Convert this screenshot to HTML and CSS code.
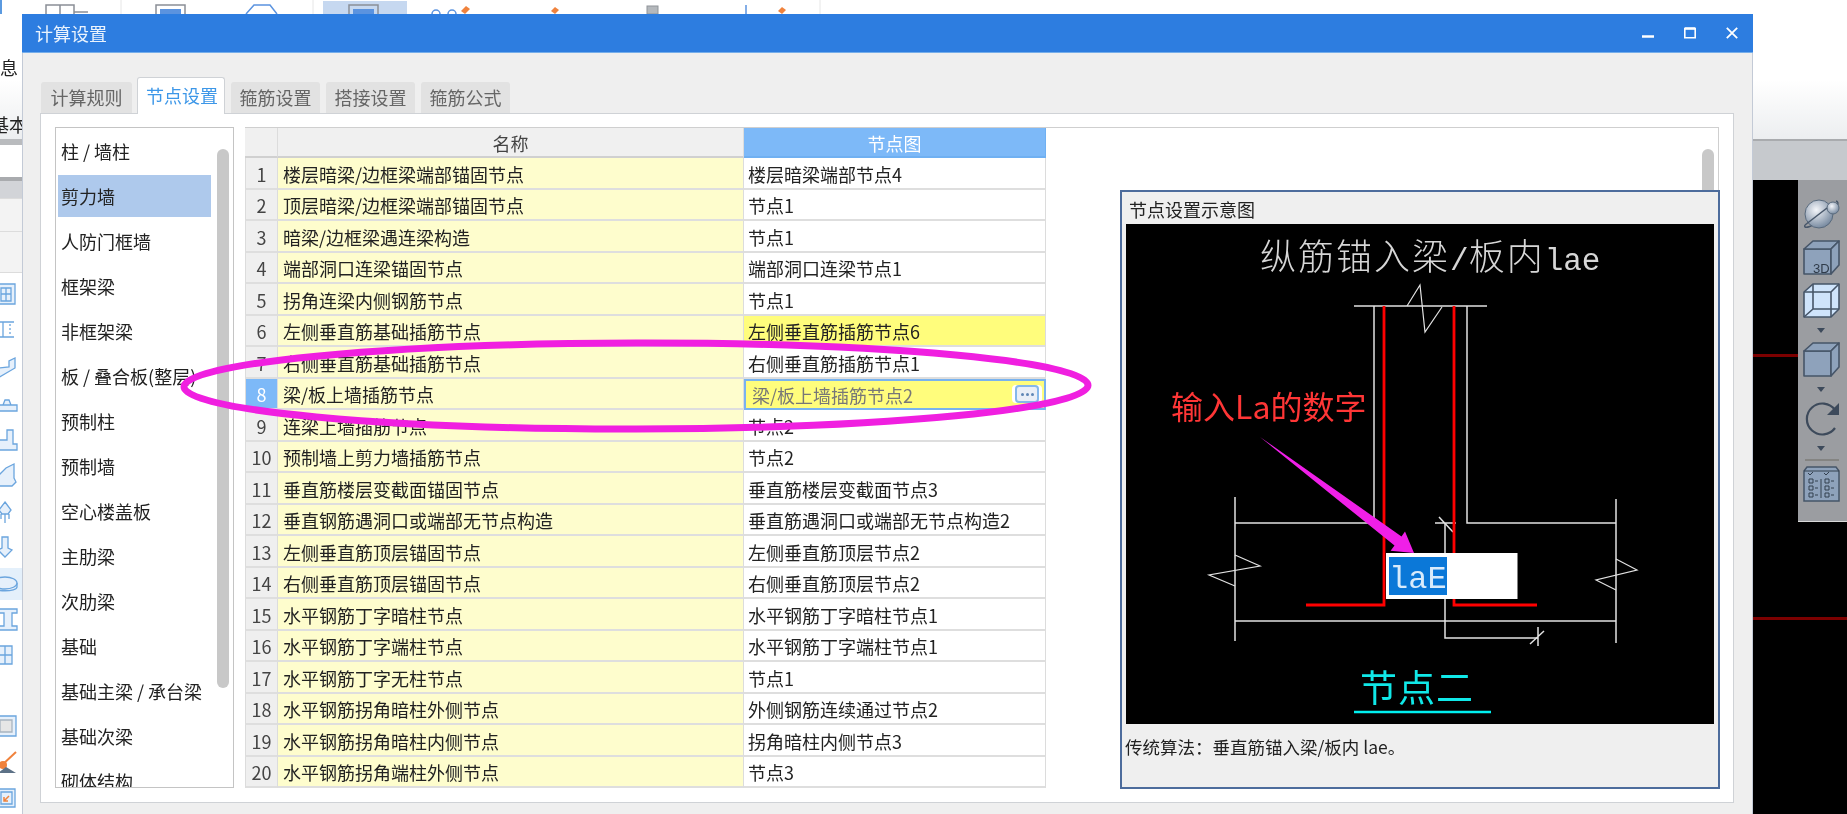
FILE: index.html
```html
<!DOCTYPE html>
<html lang="zh-CN">
<head>
<meta charset="utf-8">
<title>计算设置</title>
<link rel="stylesheet" href="styles.css">
</head>
<body>
<div class="app">
  <header class="ribbon">
    <svg class="ribbon-icons" viewBox="0 0 860 14" width="860" height="14">
      <rect x="0" y="0" width="2" height="14" fill="#5b9ae0"/>
      <rect x="323" y="1" width="84" height="13" fill="#c6d8f0"/>
      <g fill="none" stroke="#8a8f96" stroke-width="1.5">
        <path d="M46 14V5H74V14M60 5V14M74 12H88"/>
        <path d="M156 14V5H185V14"/>
        <path d="M349 14V5H378V14"/>
      </g>
      <rect x="160" y="9" width="21" height="5" fill="#5b93df"/>
      <rect x="353" y="9" width="21" height="5" fill="#5b93df"/>
      <path d="M246 14L254 5H270L277 14" fill="none" stroke="#5b93df" stroke-width="1.5"/>
      <path d="M121 0V14M313 0V14M820 0V14" stroke="#e6e6e6"/>
      <g fill="none" stroke="#5b93df" stroke-width="1.5">
        <circle cx="436" cy="14" r="4"/><circle cx="452" cy="14" r="4"/>
      </g>
      <path d="M746 5V14" stroke="#5b93df" stroke-width="1.5"/>
      <g fill="#f0823c">
        <path d="M466 6l4 3-5 5-4-3z"/><path d="M555 7l4 3-4 4-4-3z"/><path d="M782 7l4 3-4 4-4-3z"/>
      </g>
      <rect x="647" y="6" width="11" height="8" fill="#b4b8bc" stroke="#8f9499"/>
    </svg>
    <div class="ribbon-left">
      <span class="ribbon-label first">息</span>
      <span class="ribbon-label second">基本</span>
    </div>
  </header>
  <div class="main">
    <aside class="side">
      <div class="side-line"></div>
      <div class="side-input"></div>
      <div class="side-line thin"></div>
      <div class="side-head"></div>
      <div class="side-row a"></div>
      <div class="side-row b"></div>
      <svg class="side-icons" viewBox="0 273 22 541" width="22" height="541">
        <rect x="0" y="568" width="22" height="32" fill="#e4f0fb"/>
        <g fill="#e6f0fb" stroke="#6ba5de" stroke-width="1.3">
          <path d="M-2 284H15V304H-2z"/><path d="M1 288H11V301H1zM6 288V301M1 294H11"/>
          <path d="M-2 322H14M-2 337H14M3 322V337"/>
          <path d="M10 324V336" stroke-dasharray="2 2"/>
          <path d="M-2 378L15 368V358L9 361V367L-2 368z"/>
          <path d="M-2 405H17V411H-2zM3 405L5 400H9L11 405"/>
          <path d="M-2 440H7V430H13V444H17V450H-2z"/>
          <path d="M-2 476L6 468L14 464V478L16 482L12 486H-2z"/>
          <path d="M5 502L11 510L8 514H2L-1 510zM5 514V523M1 514V519M9 514V519"/>
          <path d="M2 537H8V548L12 550L5 557L-2 550L2 548z"/>
          <path d="M-7 583V587C-7 592 17 592 17 587V583"/>
          <ellipse cx="5" cy="583" rx="12" ry="6"/>
          <path d="M-2 609H17V613H12V626H17V630H-2V626H4V613H-2z"/>
          <path d="M-2 646H12V664H-2zM5 646V664M-2 655H12"/>
          <path d="M-2 716H16V736H-2z"/>
          <path d="M0 720H12V732H0z" fill="#e6e6e6" stroke="#a8b4c0"/>
          <path d="M-2 789H15V807H-2zM1 792H12V804H1z"/>
        </g>
        <path d="M1 766L16 752" stroke="#f0823c" stroke-width="2"/>
        <circle cx="3" cy="765" r="4" fill="#f0823c"/>
        <path d="M-2 773L6 767L16 773z" fill="#5c7186"/>
        <path d="M9 796L4 801M4 797V801H8" fill="none" stroke="#f0823c" stroke-width="1.5"/>
      </svg>
    </aside>
    <div class="under"></div>
    <section class="view">
      <div class="view-band"></div>
      <div class="canvas">
        <svg class="toolbar" viewBox="1798 181 49 341" width="49" height="341">
          <defs>
            <radialGradient id="ball" cx="40%" cy="35%" r="70%">
              <stop offset="0" stop-color="#f4f6fa"/>
              <stop offset="1" stop-color="#71849b"/>
            </radialGradient>
          </defs>
          <rect x="1798" y="181" width="49" height="341" fill="#9b9da1"/>
          <path d="M1805 226C1803 231 1812 228 1828 217C1838 209 1840 203 1836 202" fill="none" stroke="#48576a" stroke-width="1.5"/>
          <circle cx="1819" cy="215" r="14" fill="url(#ball)" stroke="#596a7d"/>
          <circle cx="1833" cy="209" r="6" fill="url(#ball)" stroke="#596a7d"/>
          <path d="M1805 226L1827 209" stroke="#48576a" stroke-width="1.5"/>
          <g fill="#8ea2bb" stroke="#465568" stroke-width="1.6" stroke-linejoin="round">
            <path d="M1804 250H1831V275H1804z"/><path d="M1804 250L1813 242H1839L1831 250z"/><path d="M1831 250L1839 242V266L1831 275z"/>
            <path d="M1804 352H1831V377H1804z"/><path d="M1804 352L1813 344H1839L1831 352z"/><path d="M1831 352L1839 344V368L1831 377z"/>
          </g>
          <text class="t3d" x="1813" y="274">3D</text>
          <g fill="#cfe4fb" stroke="#465568" stroke-width="1.6" stroke-linejoin="round">
            <path d="M1804 293L1813 285H1839V310L1831 318H1804z"/>
            <path d="M1804 293H1831V318M1831 293L1839 285M1813 285V310H1839M1804 318L1813 310" fill="none"/>
          </g>
          <g fill="#3d4a5b">
            <path d="M1817 329H1825L1821 334z"/><path d="M1817 388H1825L1821 393z"/><path d="M1817 447H1825L1821 452z"/>
            <path d="M1839 404V416H1827z"/>
          </g>
          <path d="M1835 411A15.500 15.500 0 1 0 1835 429" fill="none" stroke="#3d4a5b" stroke-width="2.200"/>
          <path d="M1805 461H1839" stroke="#7c7c78" stroke-width="1.500"/>
          <g fill="#8ea2bb" stroke="#465568" stroke-width="1.500">
            <path d="M1804 472L1807 468H1836L1839 472V502H1804z"/>
          </g>
          <g fill="none" stroke="#33404f" stroke-width="1">
            <path d="M1804 472H1839M1821 480V499"/>
            <path d="M1808 474l2 2 3-3M1824 474l2 2 3-3"/>
            <path d="M1809 480h4v4h-4zM1809 487h4v4h-4zM1809 494h4v4h-4zM1825 480h4v4h-4zM1825 487h4v4h-4zM1825 494h4v4h-4z"/>
            <path d="M1815 482h3M1815 489h3M1815 496h3M1831 482h3M1831 489h3M1831 496h3"/>
          </g>
        </svg>
      </div>
    </section>
  </div>

  <div class="dialog">
    <div class="titlebar">
      <span class="title">计算设置</span>
      <div class="winbtns">
        <svg class="winbtn" viewBox="0 0 12 12" width="12" height="12"><path d="M0 9.500H12" stroke="#fff" stroke-width="2.500"/></svg>
        <svg class="winbtn" viewBox="0 0 12 12" width="12" height="12"><path d="M.8 1.500H11.200V10.800H.8z" fill="none" stroke="#fff" stroke-width="1.600"/><path d="M.8 1.500H11.200" stroke="#fff" stroke-width="2.500"/></svg>
        <svg class="winbtn" viewBox="0 0 12 12" width="12" height="12"><path d="M.8 .8L11.200 11.200M11.200 .8L.8 11.200" stroke="#fff" stroke-width="1.800"/></svg>
      </div>
    </div>
    <nav class="tabs">
      <span class="tab w91">计算规则</span>
      <span class="tab active">节点设置</span>
      <span class="tab">箍筋设置</span>
      <span class="tab">搭接设置</span>
      <span class="tab">箍筋公式</span>
    </nav>
    <div class="pane">
      <div class="list">
        <div class="item">柱 / 墙柱</div>
        <div class="item selected">剪力墙</div>
        <div class="item">人防门框墙</div>
        <div class="item">框架梁</div>
        <div class="item">非框架梁</div>
        <div class="item">板 / 叠合板(整层)</div>
        <div class="item">预制柱</div>
        <div class="item">预制墙</div>
        <div class="item">空心楼盖板</div>
        <div class="item">主肋梁</div>
        <div class="item">次肋梁</div>
        <div class="item">基础</div>
        <div class="item">基础主梁 / 承台梁</div>
        <div class="item">基础次梁</div>
        <div class="item">砌体结构</div>
        <div class="scroll list-scroll"></div>
      </div>
      <div class="region">
        <div class="scroll region-scroll"></div>
        <div class="grid">
          <div class="cell head"></div><div class="cell head">名称</div><div class="cell head blue">节点图</div>
          <div class="cell num">1</div><div class="cell name">楼层暗梁/边框梁端部锚固节点</div><div class="cell node">楼层暗梁端部节点4</div>
          <div class="cell num">2</div><div class="cell name">顶层暗梁/边框梁端部锚固节点</div><div class="cell node">节点1</div>
          <div class="cell num">3</div><div class="cell name">暗梁/边框梁遇连梁构造</div><div class="cell node">节点1</div>
          <div class="cell num">4</div><div class="cell name">端部洞口连梁锚固节点</div><div class="cell node">端部洞口连梁节点1</div>
          <div class="cell num">5</div><div class="cell name">拐角连梁内侧钢筋节点</div><div class="cell node">节点1</div>
          <div class="cell num">6</div><div class="cell name">左侧垂直筋基础插筋节点</div><div class="cell node changed">左侧垂直筋插筋节点6</div>
          <div class="cell num">7</div><div class="cell name">右侧垂直筋基础插筋节点</div><div class="cell node">右侧垂直筋插筋节点1</div>
          <div class="cell num current">8</div><div class="cell name">梁/板上墙插筋节点</div>
          <div class="cell editing"><span class="edit-text">梁/板上墙插筋节点2</span><span class="more"><i></i><i></i><i></i></span></div>
          <div class="cell num">9</div><div class="cell name">连梁上墙插筋节点</div><div class="cell node">节点2</div>
          <div class="cell num">10</div><div class="cell name">预制墙上剪力墙插筋节点</div><div class="cell node">节点2</div>
          <div class="cell num">11</div><div class="cell name">垂直筋楼层变截面锚固节点</div><div class="cell node">垂直筋楼层变截面节点3</div>
          <div class="cell num">12</div><div class="cell name">垂直钢筋遇洞口或端部无节点构造</div><div class="cell node">垂直筋遇洞口或端部无节点构造2</div>
          <div class="cell num">13</div><div class="cell name">左侧垂直筋顶层锚固节点</div><div class="cell node">左侧垂直筋顶层节点2</div>
          <div class="cell num">14</div><div class="cell name">右侧垂直筋顶层锚固节点</div><div class="cell node">右侧垂直筋顶层节点2</div>
          <div class="cell num">15</div><div class="cell name">水平钢筋丁字暗柱节点</div><div class="cell node">水平钢筋丁字暗柱节点1</div>
          <div class="cell num">16</div><div class="cell name">水平钢筋丁字端柱节点</div><div class="cell node">水平钢筋丁字端柱节点1</div>
          <div class="cell num">17</div><div class="cell name">水平钢筋丁字无柱节点</div><div class="cell node">节点1</div>
          <div class="cell num">18</div><div class="cell name">水平钢筋拐角暗柱外侧节点</div><div class="cell node">外侧钢筋连续通过节点2</div>
          <div class="cell num">19</div><div class="cell name">水平钢筋拐角暗柱内侧节点</div><div class="cell node">拐角暗柱内侧节点3</div>
          <div class="cell num">20</div><div class="cell name">水平钢筋拐角端柱外侧节点</div><div class="cell node">节点3</div>
        </div>
        <div class="preview">
          <div class="preview-title">节点设置示意图</div>
          <svg class="drawing" viewBox="1126 224 588 500" width="588" height="500">
            <text class="dw-title" x="1260" y="270">纵筋锚入梁<tspan class="dw-mono">/</tspan>板内<tspan class="dw-mono">lae</tspan></text>
            <g fill="none" stroke="#e2e2e2" stroke-width="1.500">
              <path d="M1354 306H1487"/>
              <path d="M1374 306V523H1235M1467 306V523H1616"/>
              <path d="M1235 497V641M1616 499V643M1235 621H1616"/>
              <path d="M1445 523V638H1538"/>
              <path d="M1435 523H1456M1439 517L1453 532M1538 627V646M1530 644L1544 631"/>
              <path d="M1407 306L1420 285L1425 332L1442 307" stroke-width="1.200"/>
              <path d="M1235 555L1260 566L1209 575L1235 586" stroke-width="1.200"/>
              <path d="M1616 559L1637 570L1596 580L1616 590" stroke-width="1.200"/>
            </g>
            <path d="M1384 306V605H1306M1454 306V605H1537" fill="none" stroke="#ff0000" stroke-width="2.800"/>
            <rect x="1386" y="553" width="131.500" height="46" fill="#fff"/>
            <rect x="1389" y="557" width="58" height="38" fill="#0b78d8"/>
            <text class="dw-input" x="1389" y="588">laE</text>
            <polygon points="1260,437 1401.500,536.400 1405,531.500 1414,553 1390.600,550.800 1394.500,545.600" fill="#f01fe8"/>
            <text class="dw-note" x="1171" y="419">输入La的数字</text>
            <text class="dw-node" x="1360" y="702">节点二</text>
            <path d="M1354 712H1491" stroke="#00f0f0" stroke-width="2.500"/>
          </svg>
          <div class="caption">传统算法：垂直筋锚入梁/板内 lae。</div>
        </div>
      </div>
    </div>
  </div>

  <svg class="ring" viewBox="0 0 1847 814" width="1847" height="814">
    <ellipse cx="636" cy="386" rx="452" ry="43" fill="none" stroke="#f01fe0" stroke-width="7" transform="rotate(-0.1 636 386)"/>
  </svg>
</div>
</body>
</html>
```

FILE: styles.css
```css
* { box-sizing: border-box; }
html, body { margin: 0; padding: 0; }
body { width: 1847px; height: 814px; overflow: hidden; background: #fff; }

.app {
  position: relative;
  width: 1847px;
  height: 814px;
  overflow: hidden;
  display: flex;
  flex-direction: column;
  font-family: "Noto Sans CJK SC", "Noto Sans", sans-serif;
  font-size: 18px;
  color: #222;
  background: #fff;
  filter: blur(0.45px);
}

/* background application */
.ribbon {
  height: 139px;
  flex: none;
  background: linear-gradient(#fff 0, #fff 80px, #eceef0 139px);
  overflow: hidden;
}
.ribbon-icons { display: block; }
.ribbon-left { width: 22px; display: flex; flex-direction: column; align-items: flex-end; }
.ribbon-label { white-space: nowrap; line-height: 20px; color: #222; }
.ribbon-label.first { margin-top: 43px; margin-right: 4px; }
.ribbon-label.second { margin-top: 37px; margin-right: -5px; }

.main { flex: 1; display: flex; min-height: 0; }
.side { width: 22px; flex: none; display: flex; flex-direction: column; background: #fff; }
.side-line { height: 6px; background: #b9bbbe; flex: none; }
.side-line.thin { height: 4px; background: #a9abae; }
.side-input { height: 32px; background: #fff; flex: none; }
.side-head { height: 17px; background: #d2d4d8; flex: none; }
.side-row { flex: none; background: #f3f3f3; border-top: 1px solid #dcdcdc; }
.side-row.a { height: 33px; }
.side-row.b { height: 42px; border-bottom: 1px solid #dcdcdc; }
.side-icons { display: block; flex: none; }
.under { flex: 1; background: #efefef; }
.view { width: 94px; flex: none; display: flex; flex-direction: column; }
.view-band { height: 41px; flex: none; background: #c6c9cd; border-top: 2px solid #a9abae; }
.canvas {
  flex: 1;
  display: flex;
  justify-content: flex-end;
  align-items: flex-start;
  background-color: #000;
  background-image: linear-gradient(#7c0000, #7c0000), linear-gradient(#7c0000, #7c0000);
  background-repeat: no-repeat;
  background-size: 100% 3px, 100% 3px;
  background-position: 0 174px, 0 437px;
}
.toolbar { display: block; box-shadow: 0 1px 0 #d8d8d8; }
.t3d { font-family: "Liberation Sans", sans-serif; font-size: 13px; fill: #2f3b49; }

/* dialog window */
.dialog {
  position: absolute;
  left: 22px;
  top: 14px;
  width: 1731px;
  height: 800px;
  display: flex;
  flex-direction: column;
  background: #efefef;
  border-left: 1px solid #c3cad6;
  border-right: 1px solid #c3cad6;
}
.titlebar {
  height: 39px;
  flex: none;
  margin: 0 -1px;
  padding: 0 15px 0 13px;
  display: flex;
  align-items: center;
  justify-content: space-between;
  background: #2d7de0;
  border-bottom: 1px solid #76aeea;
  color: #fff;
}
.title { font-size: 18px; line-height: 24px; color: #eaf3fd; }
.winbtns { display: flex; gap: 30px; }
.winbtn { display: block; }

.tabs {
  height: 37px;
  flex: none;
  margin: 23px 0 0 18px;
  display: flex;
  align-items: flex-end;
  gap: 6px;
}
.tab {
  width: 89px;
  height: 31px;
  padding-bottom: 2px;
  display: flex;
  align-items: center;
  justify-content: center;
  background: #e2e2e2;
  color: #666;
  line-height: 24px;
  border-radius: 3px 3px 0 0;
}
.tab.w91 { width: 91px; }
.tab.active {
  width: 88px;
  height: 37px;
  margin-left: -1px;
  margin-bottom: -1px;
  padding-left: 2px;
  background: #fff;
  color: #3d97e8;
  border: 1px solid #cfd2d6;
  border-bottom: 0;
  position: relative;
  z-index: 1;
}

.pane {
  width: 1694px;
  height: 690px;
  flex: none;
  margin-left: 17px;
  padding: 13px 14px 14px 14px;
  display: flex;
  gap: 11px;
  background: #fff;
  border: 1px solid #cfd2d6;
}

/* left list */
.list {
  position: relative;
  width: 179px;
  flex: none;
  overflow: hidden;
  padding: 2px 2px 0 2px;
  border: 1px solid #c4c4c4;
  display: flex;
  flex-direction: column;
  gap: 3px;
}
.item {
  height: 42px;
  flex: none;
  width: 153px;
  padding: 0 0 0 3px;
  display: flex;
  align-items: center;
  white-space: nowrap;
  line-height: 24px;
}
.item.selected { background: #aec9ec; }
.scroll { position: absolute; width: 12px; background: #c8c8c8; border-radius: 6px 6px 0 0; }
.list-scroll { left: 161px; top: 21px; height: 539px; border-radius: 6px; }

/* table region */
.region {
  position: relative;
  flex: 1;
  display: flex;
  justify-content: space-between;
  align-items: flex-start;
  border: 1px solid #cfcfcf;
  border-bottom: 0;
}
.region-scroll { right: 4px; top: 21px; height: 60px; }
.grid {
  width: 801px;
  flex: none;
  display: grid;
  grid-template-columns: 33px 466px 302px;
  grid-template-rows: 30px repeat(20, 31.5px);
  margin-left: -1px;
}
.cell {
  display: flex;
  align-items: center;
  min-width: 0;
  padding-top: 2px;
  white-space: nowrap;
  line-height: 24px;
  border-right: 1px solid #dcdcdc;
  border-bottom: 2px solid #dedede;
}
.head { justify-content: center; background: #f0f0f0; color: #444; border-bottom-color: #d0d0d0; }
.head.blue { background: #7db9f8; color: #fff; border-color: #6fb0f2; }
.num { justify-content: center; background: #efefef; color: #444; border-left: 1px solid #dcdcdc; }
.num.current { background: #7db9f8; color: #fff; }
.name { padding-left: 5px; background: #fefdcd; }
.node { padding-left: 4px; background: #fff; }
.node.changed { background: #fffd7c; }
.editing {
  padding: 0 5px 0 0;
  background: #fffd7c;
  border: 2px solid #79b3ee;
  position: relative;
  justify-content: space-between;
}
.edit-text { padding-left: 6px; padding-top: 1px; color: #777; }
.more {
  width: 24px;
  height: 18px;
  display: flex;
  align-items: center;
  justify-content: center;
  gap: 2px;
  background: #e9eef7;
  border: 2px solid #85b7ea;
  border-radius: 4px;
  box-shadow: -3px 0 0 #fff, 3px 0 0 #fff;
}
.more i { width: 3px; height: 3px; border-radius: 50%; background: #5f86b5; }

/* floating preview */
.preview {
  width: 600px;
  height: 599px;
  flex: none;
  margin: 62px -2px 0 0;
  position: relative;
  padding: 0 4px;
  display: flex;
  flex-direction: column;
  background: #efefef;
  border: 2px solid #4d6c9c;
}
.preview-title { height: 32px; flex: none; padding: 4px 0 0 3px; line-height: 26px; }
.drawing { display: block; flex: none; background: #000; }
.caption { padding-top: 11px; font-size: 17.5px; line-height: 24px; margin-left: -1px; white-space: nowrap; }
.dw-title { font-size: 36px; letter-spacing: 2px; fill: #d6d6d6; font-weight: 300; }
.dw-mono { font-family: "Liberation Mono", monospace; font-size: 31px; letter-spacing: 0; }
.dw-input { font-family: "Liberation Mono", monospace; font-size: 32px; fill: #d9ebfb; }
.dw-note { font-size: 32px; fill: #ff3636; }
.dw-node { font-size: 37px; fill: #10e8e8; letter-spacing: 1px; }

.ring { position: absolute; left: 0; top: 0; pointer-events: none; }
```
